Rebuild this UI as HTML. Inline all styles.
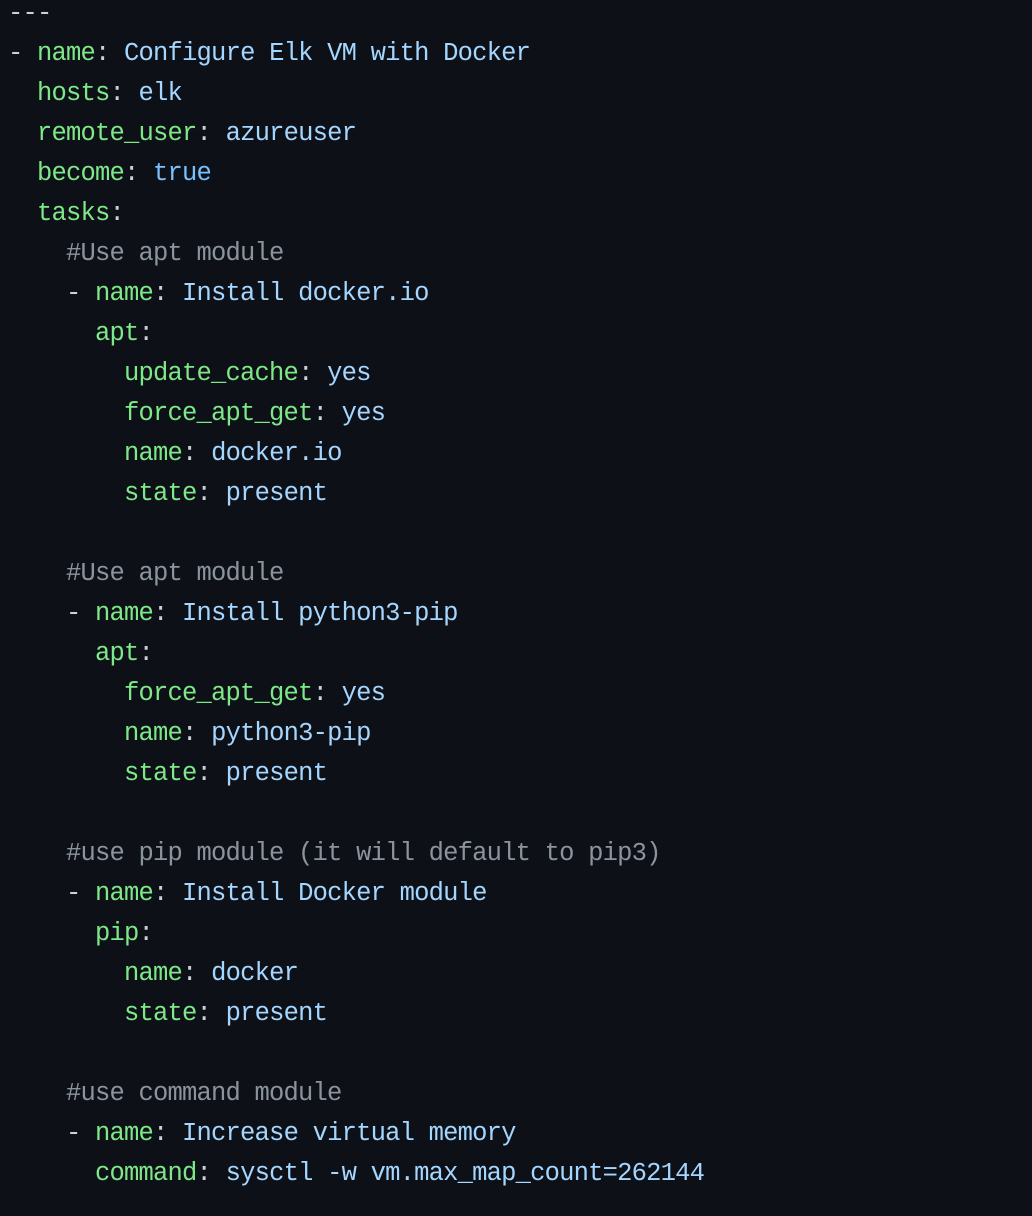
<!DOCTYPE html>
<html><head><meta charset="utf-8"><style>
html,body{margin:0;padding:0;background:#0d1117;width:1032px;height:1216px;overflow:hidden}
pre{margin:0;position:absolute;left:8px;top:-6px;font-family:"Liberation Mono",monospace;font-size:25.5px;letter-spacing:-0.8px;line-height:40px;color:#c9d1d9;white-space:pre}
.k{color:#7ee787}.s{color:#a5d6ff}.b{color:#79c0ff}.c{color:#8b949e}
</style></head><body><pre>---
- <span class="k">name</span>: <span class="s">Configure Elk VM with Docker</span>
  <span class="k">hosts</span>: <span class="s">elk</span>
  <span class="k">remote_user</span>: <span class="s">azureuser</span>
  <span class="k">become</span>: <span class="b">true</span>
  <span class="k">tasks</span>:
    <span class="c">#Use apt module</span>
    - <span class="k">name</span>: <span class="s">Install docker.io</span>
      <span class="k">apt</span>:
        <span class="k">update_cache</span>: <span class="s">yes</span>
        <span class="k">force_apt_get</span>: <span class="s">yes</span>
        <span class="k">name</span>: <span class="s">docker.io</span>
        <span class="k">state</span>: <span class="s">present</span>

    <span class="c">#Use apt module</span>
    - <span class="k">name</span>: <span class="s">Install python3-pip</span>
      <span class="k">apt</span>:
        <span class="k">force_apt_get</span>: <span class="s">yes</span>
        <span class="k">name</span>: <span class="s">python3-pip</span>
        <span class="k">state</span>: <span class="s">present</span>

    <span class="c">#use pip module (it will default to pip3)</span>
    - <span class="k">name</span>: <span class="s">Install Docker module</span>
      <span class="k">pip</span>:
        <span class="k">name</span>: <span class="s">docker</span>
        <span class="k">state</span>: <span class="s">present</span>

    <span class="c">#use command module</span>
    - <span class="k">name</span>: <span class="s">Increase virtual memory</span>
      <span class="k">command</span>: <span class="s">sysctl -w vm.max_map_count=262144</span>
</pre></body></html>
